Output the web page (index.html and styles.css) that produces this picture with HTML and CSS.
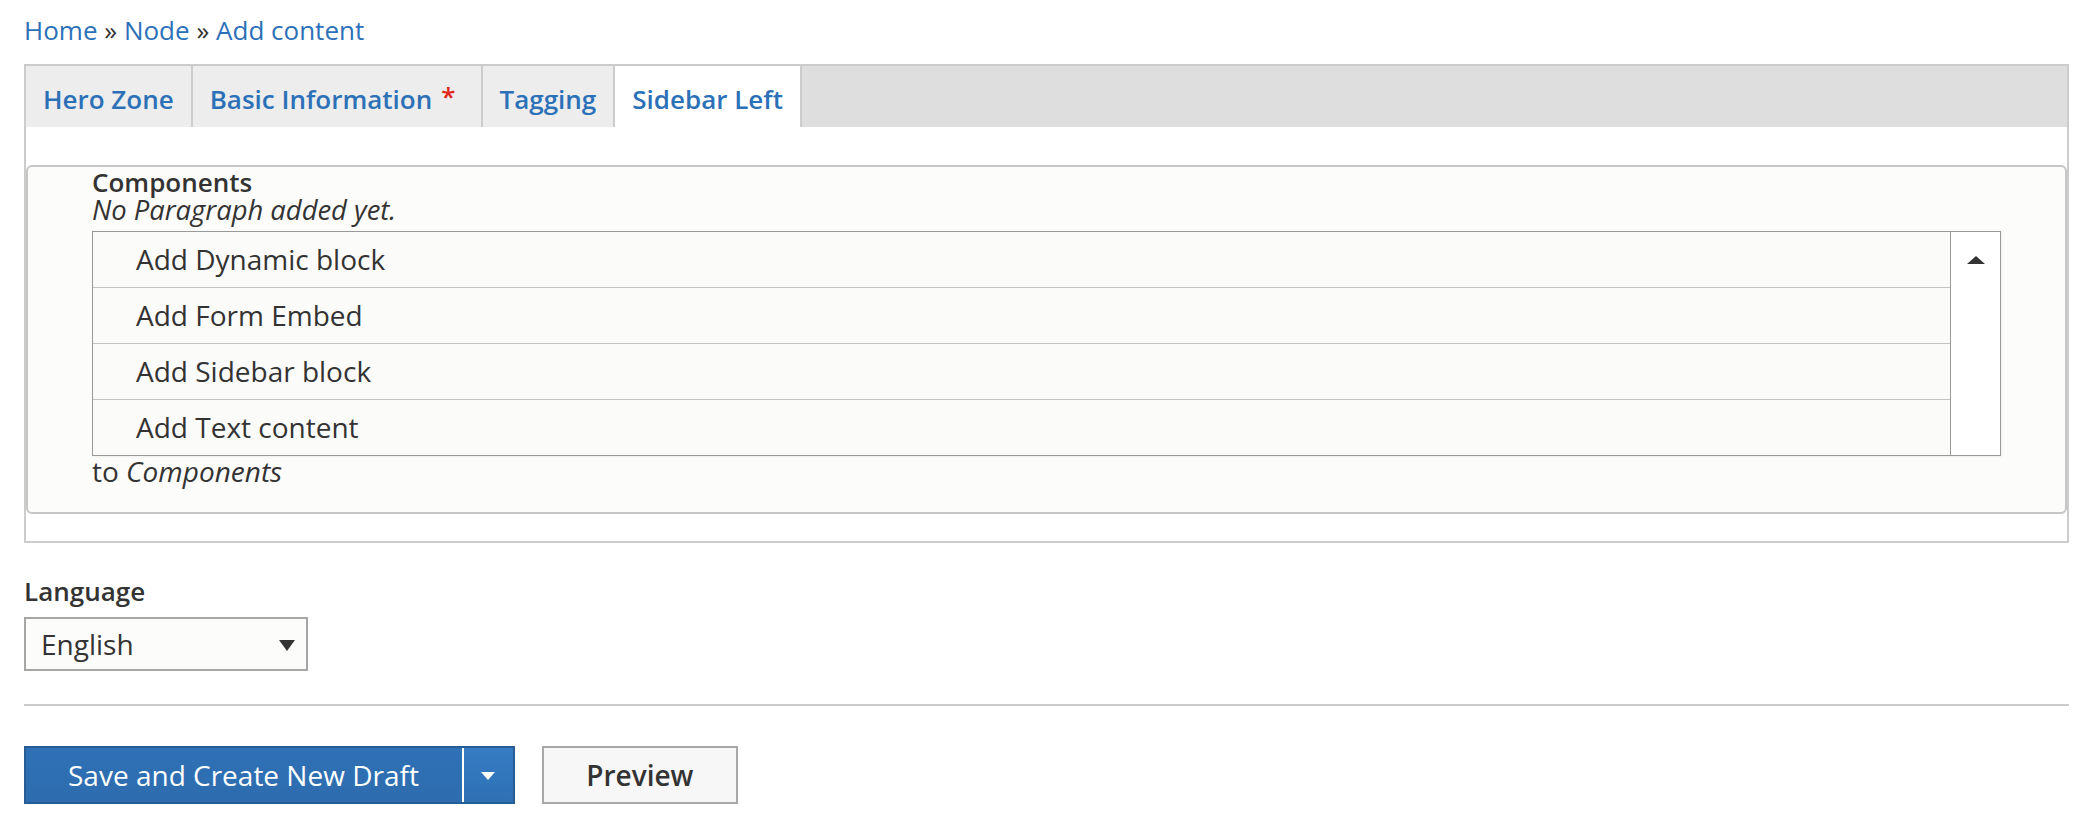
FILE: index.html
```html
<!DOCTYPE html>
<html lang="en">
<head>
<meta charset="utf-8">
<title>Add content</title>
<link rel="stylesheet" href="styles.css">
</head>
<body>
<div class="page">
  <nav class="breadcrumb">
    <a href="#">Home</a> <span class="sep">»</span> <a href="#">Node</a> <span class="sep">»</span> <a href="#">Add content</a>
  </nav>

  <div class="tabs-wrap">
    <ul class="tabs">
      <li class="tab">Hero Zone</li>
      <li class="tab">Basic Information<span class="req">*</span></li>
      <li class="tab">Tagging</li>
      <li class="tab active">Sidebar Left</li>
    </ul>
    <div class="tab-pane">
      <div class="field-box">
        <div class="field-label">Components</div>
        <div class="field-empty">No Paragraph added yet.</div>
        <div class="dropbutton">
          <ul class="db-items">
            <li>Add Dynamic block</li>
            <li>Add Form Embed</li>
            <li>Add Sidebar block</li>
            <li>Add Text content</li>
          </ul>
          <div class="db-toggle"><span class="arrow-up"></span></div>
        </div>
        <div class="to-field">to <em>Components</em></div>
      </div>
    </div>
  </div>

  <div class="form-item">
    <div class="lang-label">Language</div>
    <div class="select"><span class="select-value">English</span><span class="arrow-down"></span></div>
  </div>

  <hr class="divider">

  <div class="actions">
    <div class="btn-primary">
      <span class="btn-main">Save and Create New Draft</span>
      <span class="btn-toggle"><span class="arrow-white"></span></span>
    </div>
    <button class="btn">Preview</button>
  </div>
</div>
</body>
</html>
```

FILE: styles.css
```css
html, body {
  margin: 0;
  padding: 0;
  background: #ffffff;
}

body {
  font-family: "Open Sans", "Noto Sans", sans-serif;
  color: #333333;
}

.page {
  padding: 10px 17px 0 24px;
}

/* Breadcrumb */
.breadcrumb {
  font-size: 26px;
  line-height: 40px;
  margin-bottom: 14px;
}
.breadcrumb a {
  color: #2c71b8;
  text-decoration: none;
}
.breadcrumb .sep {
  color: #333333;
}

/* Tabs container */
.tabs-wrap {
  border: 2px solid #cccccc;
}
.tabs {
  display: flex;
  margin: 0;
  padding: 0;
  list-style: none;
  background: #dedede;
  height: 61px;
}
.tab {
  background: #ededed;
  border-right: 2px solid #cccccc;
  padding: 6px 17px 0 17px;
  font-size: 26px;
  font-weight: 600;
  line-height: 55px;
  color: #2c71b8;
  white-space: nowrap;
}
.tab.active {
  background: #ffffff;
}
.req {
  color: #e0261d;
  margin-left: 9px;
  margin-right: 8px;
  line-height: 0;
  vertical-align: 3px;
}

.tab-pane {
  background: #ffffff;
  padding: 38px 0 27px 0;
}

/* Fieldset-ish box */
.field-box {
  background: #fcfcfa;
  border: 2px solid #c6c6c4;
  border-radius: 6px;
  padding: 2px 64px 27px 64px;
}
.field-label {
  font-size: 26px;
  font-weight: 600;
  line-height: 27px;
}
.field-empty {
  font-size: 27.4px;
  font-style: italic;
  line-height: 27px;
}

/* Dropbutton */
.dropbutton {
  display: flex;
  margin-top: 8px;
  border: 1px solid #999999;
  background: #fbfbf9;
  box-shadow: 1px 1px 2px rgba(0, 0, 0, 0.06);
}
.db-items {
  flex: 1;
  margin: 0;
  padding: 0;
  list-style: none;
}
.db-items li {
  height: 55px;
  line-height: 55px;
  padding-left: 43px;
  font-size: 28px;
  border-bottom: 1px solid #c3c3bf;
}
.db-items li:last-child {
  border-bottom: none;
}
.db-toggle {
  width: 50px;
  border-left: 1px solid #999999;
  background: #ffffff;
  display: flex;
  justify-content: center;
  align-items: flex-start;
  padding-top: 24px;
  box-sizing: border-box;
}
.arrow-up {
  width: 0;
  height: 0;
  border-left: 9px solid transparent;
  border-right: 9px solid transparent;
  border-bottom: 8px solid #333333;
}

.to-field {
  margin-top: 2px;
  font-size: 28px;
  line-height: 27px;
}

/* Language */
.form-item {
  margin-top: 33px;
}
.lang-label {
  font-size: 26px;
  font-weight: 600;
  line-height: 30px;
}
.select {
  margin-top: 11px;
  width: 284px;
  height: 54px;
  box-sizing: border-box;
  border: 2px solid #a6a6a6;
  background: #fcfcfa;
  display: flex;
  align-items: center;
  justify-content: space-between;
  padding: 0 11px 0 15px;
}
.select-value {
  font-size: 28px;
  line-height: 50px;
}
.arrow-down {
  width: 0;
  height: 0;
  border-left: 8.5px solid transparent;
  border-right: 8.5px solid transparent;
  border-top: 11px solid #333333;
  margin-top: 2px;
}

.divider {
  margin: 33px 0 0 0;
  border: none;
  border-top: 2px solid #cbcbcb;
  height: 0;
}

/* Actions */
.actions {
  display: flex;
  align-items: flex-start;
  margin-top: 40px;
}
.btn-primary {
  display: flex;
  height: 58px;
  box-sizing: border-box;
  border: 2px solid #275c95;
  background: linear-gradient(#2f71b6, #2d6cae);
}
.btn-main {
  padding: 0 43px 0 42px;
  font-size: 28px;
  line-height: 54px;
  color: #ffffff;
  border-right: 2px solid #ffffff;
  white-space: nowrap;
}
.btn-toggle {
  width: 49px;
  display: flex;
  align-items: center;
  justify-content: center;
  background: linear-gradient(#357cc4, #2e70b3);
}
.arrow-white {
  width: 0;
  height: 0;
  border-left: 7.5px solid transparent;
  border-right: 7.5px solid transparent;
  border-top: 8px solid #ffffff;
  margin-top: 2px;
}
.btn {
  margin: 0 0 0 27px;
  height: 58px;
  width: 196px;
  box-sizing: border-box;
  border: 2px solid #a8a8a8;
  background: #f7f7f7;
  font-family: "Open Sans", "Noto Sans", sans-serif;
  font-size: 28px;
  font-weight: 600;
  color: #333333;
  padding: 0;
  line-height: 54px;
}
```
